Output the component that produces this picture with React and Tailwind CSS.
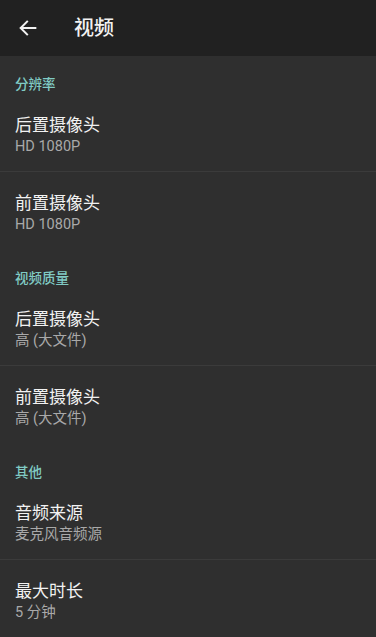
import React from 'react'

const sections = [
  {
    title: '分辨率',
    items: [
      { label: '后置摄像头', value: 'HD 1080P' },
      { label: '前置摄像头', value: 'HD 1080P' },
    ],
  },
  {
    title: '视频质量',
    items: [
      { label: '后置摄像头', value: '高 (大文件)' },
      { label: '前置摄像头', value: '高 (大文件)' },
    ],
  },
  {
    title: '其他',
    items: [
      { label: '音频来源', value: '麦克风音频源' },
      { label: '最大时长', value: '5 分钟' },
    ],
  },
]

function Pref({ label, value, last }) {
  return (
    <div className={`h-[78px] px-[15px] pt-[20px] ${last ? '' : 'border-b-[1.5px] border-[#3b3b3b]'}`}>
      <div className="text-[17px] leading-[22px] text-[#f2f2f2]">{label}</div>
      <div className="mt-[1px] text-[14.5px] leading-[20px] text-[#a9a9a9]">{value}</div>
    </div>
  )
}

export default function App() {
  return (
    <div className="w-[376px] h-[637px] overflow-hidden bg-[#2f2f2f] font-['Roboto','Noto_Sans_CJK_SC',sans-serif]">
      {/* App bar */}
      <div className="h-[56px] bg-[#212121] flex items-center">
        <div className="w-[74px] pl-[17px] flex items-center">
          <svg width="22" height="22" viewBox="0 0 24 24" fill="none" stroke="#f2f2f2" strokeWidth="2.2" strokeLinecap="square">
            <path d="M20 12H5" />
            <path d="M11 5l-7 7 7 7" />
          </svg>
        </div>
        <div className="text-[20px] text-[#f2f2f2] font-medium">视频</div>
      </div>

      {sections.map((s) => (
        <div key={s.title}>
          <div className="h-[38px] px-[15px] pt-[19px] text-[13.5px] leading-[18px] font-medium text-[#80cbc4]">
            {s.title}
          </div>
          {s.items.map((it, i) => (
            <Pref key={i} {...it} last={i === s.items.length - 1} />
          ))}
        </div>
      ))}
    </div>
  )
}
